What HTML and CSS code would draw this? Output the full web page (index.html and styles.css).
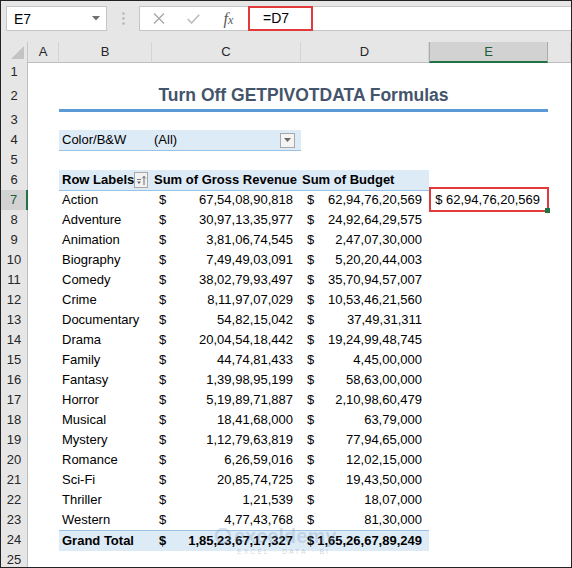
FILE: index.html
```html
<!DOCTYPE html>
<html lang="en">
<head>
    <meta charset="UTF-8">
    <meta name="viewport" content="width=device-width, initial-scale=1.0">
    <title>Turn Off GETPIVOTDATA Formulas</title>
    <link rel="stylesheet" href="styles.css">
</head>
<body>
    <div class="window">
        <div class="formula-bar">
            <div class="name-box">
                <span>E7</span>
                <svg width="8" height="5" viewBox="0 0 8 5"><polygon points="0,0 8,0 4,4.5" fill="#6f6f6f"/></svg>
            </div>
            <div class="grip">
                <svg width="3" height="13" viewBox="0 0 3 13">
                    <circle cx="1.5" cy="1.5" r="1.2" fill="#b4b4b4"/>
                    <circle cx="1.5" cy="6.5" r="1.2" fill="#b4b4b4"/>
                    <circle cx="1.5" cy="11.5" r="1.2" fill="#b4b4b4"/>
                </svg>
            </div>
            <div class="fx-bar">
                <div class="fx-icons">
                    <span class="icon">
                        <svg width="12" height="11" viewBox="0 0 12 11"><path d="M1 0.5 L11 10.5 M11 0.5 L1 10.5" stroke="#a8a8a8" stroke-width="1.4" fill="none"/></svg>
                    </span>
                    <span class="icon">
                        <svg width="13" height="10" viewBox="0 0 13 10"><path d="M0.8 5 L4.6 9 L12.2 0.8" stroke="#bdbdbd" stroke-width="1.6" fill="none"/></svg>
                    </span>
                    <span class="icon fx">f<small>x</small></span>
                </div>
                <div class="formula">=D7</div>
            </div>
        </div>

        <div class="sheet">
            <div class="row head">
                <div class="corner">
                    <svg width="13" height="13" viewBox="0 0 13 13"><polygon points="13,0 13,13 0,13" fill="#c3c3c3"/></svg>
                </div>
                <div class="ch">A</div>
                <div class="ch">B</div>
                <div class="ch">C</div>
                <div class="ch">D</div>
                <div class="ch sel">E</div>
                <div class="ch"></div>
            </div>

            <div class="row"><div class="rh">1</div></div>
            <div class="row tall">
                <div class="rh">2</div><div></div>
                <div class="title">Turn Off GETPIVOTDATA Formulas</div>
            </div>
            <div class="row"><div class="rh">3</div></div>
            <div class="row">
                <div class="rh">4</div><div></div>
                <div class="cell band filter">Color/B&amp;W</div>
                <div class="cell band filter split">
                    <span>(All)</span>
                    <span class="drop"><svg width="7" height="4" viewBox="0 0 7 4"><polygon points="0,0 7,0 3.5,4" fill="#6a6a6a"/></svg></span>
                </div>
            </div>
            <div class="row"><div class="rh">5</div></div>
            <div class="row">
                <div class="rh">6</div><div></div>
                <div class="cell band header split">
                    <span>Row Labels</span>
                    <span class="sort">
                        <svg width="12" height="12" viewBox="0 0 12 12">
                            <path d="M2 5.5 H6" stroke="#7a7a7a" stroke-width="1"/>
                            <polygon points="2,7.5 6,7.5 4,10" fill="#6a6a6a"/>
                            <path d="M9 11 V2.5 M7.3 4.3 L9 2.3 L10.7 4.3" stroke="#6a6a6a" stroke-width="1" fill="none"/>
                        </svg>
                    </span>
                </div>
                <div class="cell band header bold">Sum of Gross Revenue</div>
                <div class="cell band header bold tight">Sum of Budget</div>
            </div>

            <div class="row">
                <div class="rh sel">7</div><div></div>
                <div class="cell">Action</div>
                <div class="cell acct"><span>$</span><span>67,54,08,90,818</span></div>
                <div class="cell acct d"><span>$</span><span>62,94,76,20,569</span></div>
                <div class="cell result">$ 62,94,76,20,569</div>
            </div>
            <div class="row">
                <div class="rh">8</div><div></div>
                <div class="cell">Adventure</div>
                <div class="cell acct"><span>$</span><span>30,97,13,35,977</span></div>
                <div class="cell acct d"><span>$</span><span>24,92,64,29,575</span></div>
            </div>
            <div class="row">
                <div class="rh">9</div><div></div>
                <div class="cell">Animation</div>
                <div class="cell acct"><span>$</span><span>3,81,06,74,545</span></div>
                <div class="cell acct d"><span>$</span><span>2,47,07,30,000</span></div>
            </div>
            <div class="row">
                <div class="rh">10</div><div></div>
                <div class="cell">Biography</div>
                <div class="cell acct"><span>$</span><span>7,49,49,03,091</span></div>
                <div class="cell acct d"><span>$</span><span>5,20,20,44,003</span></div>
            </div>
            <div class="row">
                <div class="rh">11</div><div></div>
                <div class="cell">Comedy</div>
                <div class="cell acct"><span>$</span><span>38,02,79,93,497</span></div>
                <div class="cell acct d"><span>$</span><span>35,70,94,57,007</span></div>
            </div>
            <div class="row">
                <div class="rh">12</div><div></div>
                <div class="cell">Crime</div>
                <div class="cell acct"><span>$</span><span>8,11,97,07,029</span></div>
                <div class="cell acct d"><span>$</span><span>10,53,46,21,560</span></div>
            </div>
            <div class="row">
                <div class="rh">13</div><div></div>
                <div class="cell">Documentary</div>
                <div class="cell acct"><span>$</span><span>54,82,15,042</span></div>
                <div class="cell acct d"><span>$</span><span>37,49,31,311</span></div>
            </div>
            <div class="row">
                <div class="rh">14</div><div></div>
                <div class="cell">Drama</div>
                <div class="cell acct"><span>$</span><span>20,04,54,18,442</span></div>
                <div class="cell acct d"><span>$</span><span>19,24,99,48,745</span></div>
            </div>
            <div class="row">
                <div class="rh">15</div><div></div>
                <div class="cell">Family</div>
                <div class="cell acct"><span>$</span><span>44,74,81,433</span></div>
                <div class="cell acct d"><span>$</span><span>4,45,00,000</span></div>
            </div>
            <div class="row">
                <div class="rh">16</div><div></div>
                <div class="cell">Fantasy</div>
                <div class="cell acct"><span>$</span><span>1,39,98,95,199</span></div>
                <div class="cell acct d"><span>$</span><span>58,63,00,000</span></div>
            </div>
            <div class="row">
                <div class="rh">17</div><div></div>
                <div class="cell">Horror</div>
                <div class="cell acct"><span>$</span><span>5,19,89,71,887</span></div>
                <div class="cell acct d"><span>$</span><span>2,10,98,60,479</span></div>
            </div>
            <div class="row">
                <div class="rh">18</div><div></div>
                <div class="cell">Musical</div>
                <div class="cell acct"><span>$</span><span>18,41,68,000</span></div>
                <div class="cell acct d"><span>$</span><span>63,79,000</span></div>
            </div>
            <div class="row">
                <div class="rh">19</div><div></div>
                <div class="cell">Mystery</div>
                <div class="cell acct"><span>$</span><span>1,12,79,63,819</span></div>
                <div class="cell acct d"><span>$</span><span>77,94,65,000</span></div>
            </div>
            <div class="row">
                <div class="rh">20</div><div></div>
                <div class="cell">Romance</div>
                <div class="cell acct"><span>$</span><span>6,26,59,016</span></div>
                <div class="cell acct d"><span>$</span><span>12,02,15,000</span></div>
            </div>
            <div class="row">
                <div class="rh">21</div><div></div>
                <div class="cell">Sci-Fi</div>
                <div class="cell acct"><span>$</span><span>20,85,74,725</span></div>
                <div class="cell acct d"><span>$</span><span>19,43,50,000</span></div>
            </div>
            <div class="row">
                <div class="rh">22</div><div></div>
                <div class="cell">Thriller</div>
                <div class="cell acct"><span>$</span><span>1,21,539</span></div>
                <div class="cell acct d"><span>$</span><span>18,07,000</span></div>
            </div>
            <div class="row">
                <div class="rh">23</div><div></div>
                <div class="cell">Western</div>
                <div class="cell acct"><span>$</span><span>4,77,43,768</span></div>
                <div class="cell acct d"><span>$</span><span>81,30,000</span></div>
            </div>
            <div class="row">
                <div class="rh">24</div><div></div>
                <div class="cell band total">Grand Total</div>
                <div class="cell band total acct"><span>$</span><span>1,85,23,67,17,327</span></div>
                <div class="cell band total acct d"><span>$</span><span>1,65,26,67,89,249</span></div>
            </div>
            <div class="row"><div class="rh">25</div></div>
        </div>

        <div class="watermark">
            <div class="wm-name">
                <svg width="16" height="16" viewBox="0 0 16 16"><circle cx="8" cy="8" r="7" fill="none" stroke="currentColor" stroke-width="2.5"/></svg>
                <span>exceldemy</span>
            </div>
            <div class="wm-sub">EXCEL · DATA · BI</div>
        </div>
    </div>
</body>
</html>
```

FILE: styles.css
```css
* { box-sizing: border-box; }
body { margin: 0; font-family: "Liberation Sans", Arial, sans-serif; font-size: 13px; color: #000; }
.window { position: relative; width: 572px; height: 568px; border: 1px solid #222; background: #e6e6e6; overflow: hidden; }

/* formula bar */
.formula-bar { display: flex; height: 41px; padding: 5px 0 0 5px; }
.name-box { display: flex; align-items: center; justify-content: space-between; width: 101px; height: 25px; padding: 0 6px 0 7px; background: #fff; border: 1px solid #c6c6c6; font-size: 14px; }
.grip { display: flex; align-items: center; justify-content: center; width: 32px; height: 25px; padding-bottom: 1px; }
.fx-bar { display: flex; flex: 1; height: 25px; background: #fff; border: 1px solid #c6c6c6; border-right: none; }
.fx-icons { display: flex; width: 108px; padding-left: 1px; }
.icon { display: flex; align-items: center; justify-content: center; width: 35px; }
.fx { font-family: "Liberation Serif", serif; font-style: italic; font-size: 16px; color: #595959; }
.fx small { font-size: 12px; margin-top: 3px; }
.formula { width: 65px; height: 25px; margin-top: -1px; padding-left: 13px; border: 2px solid #e23a3a; line-height: 21px; font-size: 14px; }

/* sheet grid */
.sheet { background: #fff; }
.row { display: grid; grid-template-columns: 27px 31px 93px 149px 128px 119px 1fr; height: 20px; line-height: 20px; }
.row.tall { height: 28px; }
.head { background: #e6e6e6; }
.head .ch { line-height: 19px; }
.corner { display: flex; align-items: flex-end; justify-content: flex-end; padding: 0 3px 3px 0; border-right: 1px solid #c6c6c6; border-bottom: 1px solid #c6c6c6; }
.ch { text-align: center; color: #262626; border-right: 1px solid #d4d4d4; border-bottom: 1px solid #bdbdbd; }
.ch.sel { background: #d2d2d2; color: #1d5e3a; border-left: 1px solid #ababab; border-right: 1px solid #ababab; border-bottom: 2px solid #217346; }
.rh { background: #e6e6e6; text-align: center; color: #262626; border-right: 1px solid #bdbdbd; border-bottom: 1px solid #d6d6d6; }
.rh.sel { background: #d2d2d2; color: #1d5e3a; border-right: 2px solid #217346; }
.tall .rh { line-height: 28px; }

.cell { padding: 0 3px; white-space: nowrap; }
.title { grid-column: 3 / 7; text-align: center; font-weight: bold; font-size: 17.5px; line-height: 27px; color: #44546a; border-bottom: 3px solid #5b9bd5; }

.band { background: #ddebf7; }
.filter { border-bottom: 1px solid #9bc2e6; }
.filter + .filter { padding-left: 2px; }
.header { border-bottom: 1px solid #9bc2e6; }
.bold, .header span:first-child { font-weight: bold; }
.header.bold { padding-left: 2px; }
.header.tight { padding-left: 1px; }
.split { display: flex; align-items: center; justify-content: space-between; }
.drop { display: flex; align-items: center; justify-content: center; width: 15px; height: 15px; margin-right: 3px; background: #f4f4f4; border: 1px solid #a8a8a8; }
.sort { display: flex; align-items: center; justify-content: center; width: 16px; height: 16px; margin-right: 2px; background: #f2f2f2; border: 1px solid #a8a8a8; }

.acct { display: flex; justify-content: space-between; padding: 0 8px 0 7px; }
.acct.d { padding: 0 7px 0 6px; }
.total { font-weight: bold; border-top: 1px solid #9bc2e6; line-height: 19px; }

.result { position: relative; text-align: right; padding-right: 8px; }
.result::after { content: ""; position: absolute; top: -3px; left: 0; right: -1px; bottom: -1px; border: 2px solid #e23a3a; }
.result::before { content: ""; position: absolute; right: -2px; bottom: -2px; width: 5px; height: 5px; background: #217346; z-index: 1; }

/* faint site watermark */
.watermark { position: absolute; left: 214px; top: 524px; color: rgba(120, 148, 185, 0.28); pointer-events: none; }
.wm-name { display: flex; align-items: center; gap: 3px; font-size: 20px; font-weight: bold; line-height: 22px; }
.wm-sub { margin: 1px 0 0 22px; font-size: 7px; letter-spacing: 2px; color: rgba(90, 100, 120, 0.28); }
```
